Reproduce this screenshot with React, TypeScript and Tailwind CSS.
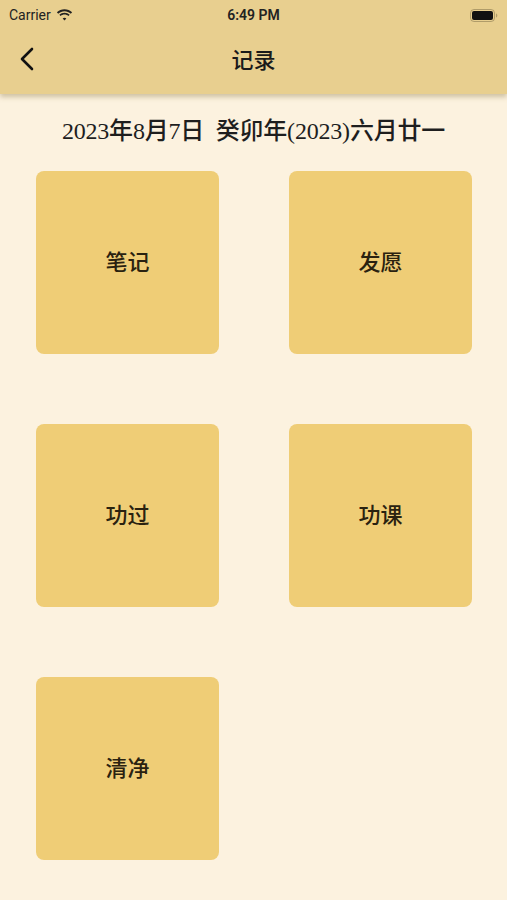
import React from 'react';

const items = ['笔记', '发愿', '功过', '功课', '清净'];

function Wifi() {
  return (
    <svg width="17" height="12" viewBox="0 0 17 12" fill="#222">
      <path d="M8.5 2.2c2.4 0 4.6.9 6.3 2.5l1.3-1.4C14.1 1.3 11.4.2 8.5.2S2.9 1.3.9 3.3l1.3 1.4C3.9 3.1 6.1 2.2 8.5 2.2z" />
      <path d="M8.5 5.6c1.5 0 2.8.5 3.9 1.5l1.3-1.4c-1.4-1.3-3.2-2-5.2-2s-3.8.7-5.2 2l1.3 1.4c1.1-1 2.4-1.5 3.9-1.5z" />
      <path d="M8.5 8.8c.7 0 1.3.3 1.8.7L8.5 11.6 6.7 9.5c.5-.4 1.1-.7 1.8-.7z" />
    </svg>
  );
}

function Battery() {
  return (
    <svg width="28" height="13" viewBox="0 0 28 13">
      <rect x="0.5" y="0.5" width="24" height="12" rx="3.5" fill="none" stroke="#8a7a50" strokeOpacity="0.6" />
      <rect x="2" y="2" width="21" height="9" rx="2" fill="#111" />
      <path d="M26 4.5v4c.8-.3 1.3-1.1 1.3-2s-.5-1.7-1.3-2z" fill="#8a7a50" fillOpacity="0.6" />
    </svg>
  );
}

export default function App() {
  return (
    <div className="w-[507px] h-[900px] bg-[#fcf2df] overflow-hidden" style={{ fontFamily: '"Noto Sans CJK SC", sans-serif' }}>
      <div className="bg-[#e8cf8f] shadow-[0_3px_5px_rgba(120,100,50,0.35)] relative z-10">
        <div className="h-[30px] flex items-center justify-between px-[9px] text-[#222]">
          <div className="flex items-center gap-[5px] w-[120px]" style={{ fontFamily: 'Roboto, "Liberation Sans", sans-serif' }}>
            <span className="text-[14px]">Carrier</span>
            <Wifi />
          </div>
          <span className="text-[14px] font-semibold" style={{ fontFamily: 'Roboto, "Liberation Sans", sans-serif' }}>6:49 PM</span>
          <div className="w-[120px] flex justify-end">
            <Battery />
          </div>
        </div>
        <div className="h-[64px] flex items-center pb-[7px]">
          <div className="pl-[18px] w-[80px]">
            <svg width="18" height="26" viewBox="0 0 18 26" fill="none" stroke="#111" strokeWidth="2.6" strokeLinecap="round" strokeLinejoin="round">
              <path d="M14 3L4 13l10 10" />
            </svg>
          </div>
          <div className="flex-1 text-center text-[22px] font-medium text-[#1a1a1a]">记录</div>
          <div className="w-[80px]" />
        </div>
      </div>
      <div className="text-center text-[24px] font-medium text-[#1e1e1e] pt-[20px] leading-[34px] tracking-[-0.2px]" style={{ fontFamily: '"Liberation Serif", "Noto Sans CJK SC", serif' }}>
        2023年8月7日&nbsp;&nbsp;癸卯年(2023)六月廿一
      </div>
      <div className="grid grid-cols-[183px_183px] gap-x-[70px] gap-y-[70px] pl-[36px] pt-[23px]">
        {items.map((t) => (
          <div key={t} className="h-[183px] rounded-[8px] bg-[#efcd76] flex items-center justify-center pb-[4px] text-[22px] font-medium text-[#2a2210]">
            {t}
          </div>
        ))}
      </div>
    </div>
  );
}
